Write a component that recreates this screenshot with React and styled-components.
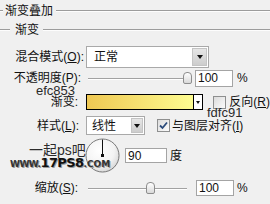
import React from 'react';
import styled, { createGlobalStyle } from 'styled-components';

const Global = createGlobalStyle`
  html, body { margin: 0; padding: 0; background: #f0f0f0; }
  body { font-family: "Liberation Sans", "Noto Sans CJK SC", sans-serif; }
`;

const Panel = styled.div`
  position: relative;
  width: 270px;
  height: 204px;
  overflow: hidden;
  background: #f0f0f0;
  color: #111;
  font-size: 12px;
  font-family: "Liberation Sans", "Noto Sans CJK SC", sans-serif;
  display: flex;
  flex-direction: column;
`;

const Legend = styled.div`
  display: flex;
  align-items: center;
  height: ${p => p.$h}px;
  flex: 0 0 auto;
`;

const Rule = styled.div`
  height: 0;
  border-top: 1px solid #9c9c9c;
  border-bottom: 1px solid #fdfdfd;
  flex: ${p => (p.$w ? `0 0 ${p.$w}px` : '1 1 auto')};
`;

const LegendText = styled.span`
  margin: 0 ${p => p.$mr}px 0 ${p => p.$ml}px;
  line-height: 14px;
  white-space: nowrap;
`;

const Row = styled.div`
  display: flex;
  align-items: center;
  flex: 0 0 auto;
  height: ${p => p.$h}px;
  margin-top: ${p => p.$top}px;
`;

const Label = styled.span`
  flex: 0 0 86px;
  box-sizing: border-box;
  padding-right: ${p => p.$pr}px;
  text-align: right;
  line-height: 14px;
  white-space: nowrap;
`;

const Key = styled.span`
  text-decoration: underline;
`;

const Select = styled.div`
  display: flex;
  width: ${p => p.$w}px;
  height: 100%;
  box-sizing: border-box;
  border: 1px solid #a9a9a9;
  background: #fff;
`;

const SelectValue = styled.span`
  flex: 1 1 auto;
  display: flex;
  align-items: center;
  padding-left: ${p => p.$pl}px;
  line-height: 14px;
`;

const SelectButton = styled.span`
  flex: 0 0 ${p => p.$w}px;
  margin: 1px;
  box-sizing: border-box;
  border: 1px solid #c4c4c4;
  background: linear-gradient(#e6e6e6, #cdcdcd);
  display: flex;
  align-items: center;
  justify-content: center;
`;

const Arrow = styled.span`
  width: 0;
  height: 0;
  border-left: ${p => p.$s}px solid transparent;
  border-right: ${p => p.$s}px solid transparent;
  border-top: ${p => p.$s + 1}px solid #111;
`;

const Slider = styled.div`
  position: relative;
  flex: 0 0 ${p => p.$w}px;
  height: 100%;
`;

const Track = styled.div`
  position: absolute;
  left: 2px;
  right: ${p => p.$r}px;
  top: 50%;
  border-top: 1px solid #a2a2a2;
  border-bottom: 1px solid #fff;
`;

const Thumb = styled.div`
  position: absolute;
  left: ${p => p.$x}px;
  top: 50%;
  width: 9px;
  height: 12px;
  margin-top: -6px;
  box-sizing: border-box;
  border: 1px solid #8d8d8d;
  border-radius: 4px 4px 2px 2px;
  background: linear-gradient(#ffffff, #d9d9d9);
`;

const NumberBox = styled.div`
  flex: 0 0 ${p => p.$w}px;
  height: ${p => p.$h}px;
  box-sizing: border-box;
  border: 1px solid #a4a4a4;
  background: #fff;
  padding-left: 2px;
  display: flex;
  align-items: center;
  font-size: 12px;
  line-height: 14px;
  margin-left: ${p => p.$ml}px;
`;

const Unit = styled.span`
  margin-left: ${p => p.$ml}px;
  line-height: 14px;
  white-space: nowrap;
`;

const GradientBox = styled.div`
  display: flex;
  width: 121px;
  height: 100%;
  box-sizing: border-box;
  border: 1px solid #000;
`;

const GradientFill = styled.div`
  flex: 1 1 auto;
  background: linear-gradient(to right, #efc853, #fdfc91);
`;

const GradientButton = styled.div`
  flex: 0 0 8px;
  border-left: 1px solid #000;
  background: #fff;
  display: flex;
  align-items: center;
  justify-content: center;
`;

const Check = styled.span`
  flex: 0 0 13px;
  height: 13px;
  box-sizing: border-box;
  border: 1px solid #8e8f8f;
  background: linear-gradient(135deg, #dcdcdc, #fbfbfb);
  margin-left: ${p => p.$ml}px;
  display: flex;
  align-items: center;
  justify-content: center;
`;

const CheckText = styled.span`
  margin-left: ${p => p.$ml}px;
  line-height: 14px;
  white-space: nowrap;
`;

const DialWrap = styled.div`
  flex: 0 0 35px;
  height: 35px;
  margin-left: 85px;
`;

const Note = styled.span`
  position: absolute;
  left: ${p => p.$x}px;
  top: ${p => p.$y}px;
  font: 13px/13px "Liberation Sans", sans-serif;
  color: #2a2a2a;
  white-space: nowrap;
`;

const Mark = styled.span`
  position: absolute;
  left: 29px;
  top: 143px;
  font: 14px/14px "Liberation Sans", "Noto Sans CJK SC", sans-serif;
  color: #2b2b2b;
  text-shadow: 0 0 1px #ffffff;
  white-space: nowrap;
`;

const Site = styled.span`
  position: absolute;
  left: 10px;
  top: 156px;
  display: flex;
  align-items: baseline;
  font-family: "DejaVu Sans", sans-serif;
  font-weight: bold;
  color: #1c1c1c;
  text-shadow: 1px 1px 0 #9a9a9a;
  white-space: nowrap;
  line-height: 13px;
`;

const SitePart = styled.span`
  font-size: ${p => p.$s}px;
  letter-spacing: ${p => p.$ls}px;
  color: ${p => p.$c};
`;

function Dial() {
  return (
    <DialWrap>
      <svg width="35" height="35" viewBox="0 0 35 35">
        <defs>
          <radialGradient id="dg" cx="40%" cy="35%" r="70%">
            <stop offset="0%" stopColor="#ffffff" />
            <stop offset="65%" stopColor="#f3f3f3" />
            <stop offset="100%" stopColor="#d6d6d6" />
          </radialGradient>
        </defs>
        <circle cx="18" cy="18" r="16.5" fill="#cfcfcf" opacity="0.5" />
        <circle cx="17.5" cy="17.5" r="16.5" fill="url(#dg)" stroke="#7b7b7b" strokeWidth="1" />
        <line x1="17.5" y1="1.5" x2="17.5" y2="17.5" stroke="#111" strokeWidth="1" />
        <rect x="16" y="16" width="3" height="3" fill="#111" />
      </svg>
    </DialWrap>
  );
}

function CheckMark() {
  return (
    <svg width="9" height="9" viewBox="0 0 9 9">
      <polyline points="1,4.5 3.5,7 8,1.5" fill="none" stroke="#2a4a7a" strokeWidth="1.8" />
    </svg>
  );
}

export default function App() {
  return (
    <>
      <Global />
      <Panel>
        <Legend $h={22}>
          <Rule $w={3} />
          <LegendText $ml={2} $mr={3}>渐变叠加</LegendText>
          <Rule />
        </Legend>
        <Legend $h={16}>
          <Rule $w={10} />
          <LegendText $ml={5} $mr={4}>渐变</LegendText>
          <Rule />
        </Legend>

        <Row $top={8} $h={22}>
          <Label $pr={2}>混合模式(<Key>O</Key>):</Label>
          <Select $w={123}>
            <SelectValue $pl={7}>正常</SelectValue>
            <SelectButton $w={15}><Arrow $s={3} /></SelectButton>
          </Select>
        </Row>

        <Row $top={1} $h={18}>
          <Label $pr={5}>不透明度(P):</Label>
          <Slider $w={107}>
            <Track $r={8} />
            <Thumb $x={97} />
          </Slider>
          <NumberBox $w={38} $h={17} $ml={2}>100</NumberBox>
          <Unit $ml={4}>%</Unit>
        </Row>

        <Row $top={7} $h={16}>
          <Label $pr={8}>渐变:</Label>
          <GradientBox>
            <GradientFill />
            <GradientButton><Arrow $s={2} /></GradientButton>
          </GradientBox>
          <Check $ml={10} />
          <CheckText $ml={3}>反向(<Key>R</Key>)</CheckText>
        </Row>

        <Row $top={6} $h={19}>
          <Label $pr={7}>样式(<Key>L</Key>):</Label>
          <Select $w={59}>
            <SelectValue $pl={5}>线性</SelectValue>
            <SelectButton $w={12}><Arrow $s={3} /></SelectButton>
          </Select>
          <Check $ml={12}><CheckMark /></Check>
          <CheckText $ml={2}>与图层对齐(<Key>I</Key>)</CheckText>
        </Row>

        <Row $top={3} $h={35}>
          <Dial />
          <NumberBox $w={42} $h={15} $ml={5}>90</NumberBox>
          <Unit $ml={3}>度</Unit>
        </Row>

        <Row $top={7} $h={16}>
          <Label $pr={8}>缩放(<Key>S</Key>):</Label>
          <Slider $w={108}>
            <Track $r={7} />
            <Thumb $x={60} />
          </Slider>
          <NumberBox $w={38} $h={16} $ml={2}>100</NumberBox>
          <Unit $ml={3}>%</Unit>
        </Row>

        <Note $x={36} $y={84}>efc853</Note>
        <Note $x={207} $y={106}>fdfc91</Note>
        <Mark>一起ps吧</Mark>
        <Site>
          <SitePart $s={9} $ls={-0.5} $c="#333">WWW.</SitePart>
          <SitePart $s={13} $ls={-0.6} $c="#111">17PS8</SitePart>
          <SitePart $s={9} $ls={0} $c="#333">.COM</SitePart>
        </Site>
      </Panel>
    </>
  );
}
